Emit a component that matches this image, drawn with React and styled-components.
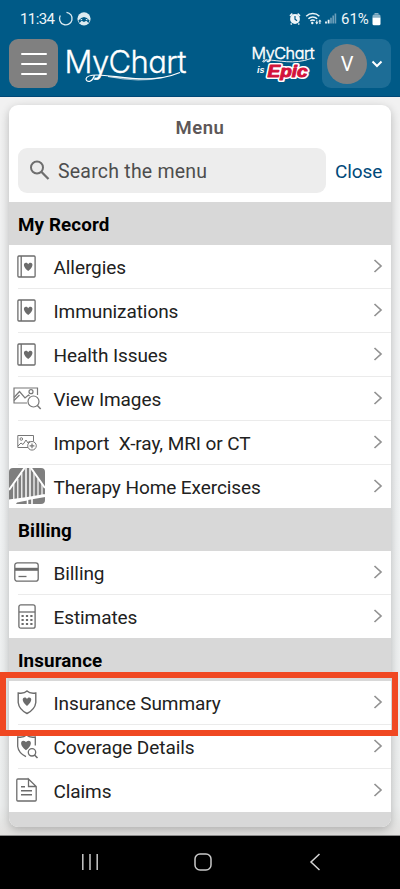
import React from 'react';
import styled, { createGlobalStyle } from 'styled-components';

const GlobalStyle = createGlobalStyle`
  * {
    box-sizing: border-box;
  }

  body {
    margin: 0;
    background: #f1f2f2;
    font-family: Roboto, sans-serif;
  }

  svg {
    display: block;
    flex: none;
    overflow: visible;
  }
`;

const Phone = styled.div`
  position: relative;
  display: flex;
  flex-direction: column;
  width: 400px;
  height: 889px;
  overflow: hidden;
`;

const Header = styled.header`
  height: 97px;
  background: #005a87;
  border-bottom: 1px solid #004877;
`;

const StatusBar = styled.div`
  display: flex;
  align-items: center;
  justify-content: space-between;
  height: 38px;
  padding: 0 19px 0 20px;
  color: #eef5f8;
`;

const StatusGroup = styled.div`
  display: flex;
  align-items: center;
`;

const StatusText = styled.span`
  width: ${({ $width }) => $width}px;
  font-size: 15px;
  line-height: 18px;
  letter-spacing: ${({ $tight }) => ($tight ? '-0.6px' : '0')};
  white-space: nowrap;
`;

const Toolbar = styled.div`
  display: flex;
  align-items: center;
  height: 49px;
  margin-top: 1px;
  padding: 0 9px;
`;

const MenuButton = styled.button`
  display: flex;
  flex-direction: column;
  align-items: center;
  justify-content: center;
  gap: 8px;
  width: 49px;
  height: 49px;
  margin-right: 2px;
  padding: 0;
  border: 0;
  border-radius: 9px;
  background: #808080;
`;

const MenuBar = styled.span`
  width: 26px;
  height: 2px;
  border-radius: 1px;
  background: #fff;
`;

const Spacer = styled.div`
  flex: 1;
`;

const AccountButton = styled.button`
  display: flex;
  align-items: center;
  gap: 4px;
  width: 69px;
  height: 49px;
  margin-left: 2px;
  padding: 0 0 0 5px;
  border: 0;
  border-radius: 9px;
  background: #1d6d96;
`;

const Avatar = styled.span`
  display: flex;
  align-items: center;
  justify-content: center;
  width: 40px;
  height: 40px;
  border-radius: 50%;
  background: #808080;
  color: #fff;
  font: 20px/1 Roboto, sans-serif;
`;

const Content = styled.main`
  height: 739px;
  padding: 8px 9px 0;
  overflow: hidden;
  border-bottom: 1px solid #8b8b8b;
  background: linear-gradient(#f1f1f1 0, #f1f3f4 50%, #eceeee 96%, #e2e1df 100%);
`;

const Card = styled.section`
  height: 722px;
  overflow: hidden;
  border-radius: 9px;
  background: #fff;
  box-shadow: 0 3px 10px rgba(0, 0, 0, 0.24);
`;

const CardTitle = styled.h1`
  height: 43px;
  margin: 0;
  padding-top: 11px;
  color: #5d5757;
  font-size: 18.5px;
  font-weight: 600;
  line-height: 24px;
  letter-spacing: 0.5px;
  text-align: center;
`;

const SearchRow = styled.div`
  display: flex;
  align-items: center;
  gap: 9px;
  height: 54px;
  padding: 0 9px 9px;
`;

const SearchBox = styled.div`
  display: flex;
  align-items: center;
  gap: 8px;
  flex: none;
  width: 308px;
  height: 45px;
  padding: 0 0 1px 11px;
  border-radius: 9px;
  background: #ededed;
`;

const SearchText = styled.span`
  padding-top: 3px;
  color: #4d4d4d;
  font-size: 19.5px;
  letter-spacing: 0.22px;
`;

const CloseLink = styled.a`
  padding-top: 2px;
  color: #00497a;
  font-size: 19px;
  letter-spacing: -0.1px;
`;

const SectionTitle = styled.h2`
  height: 43px;
  margin: 0;
  padding-left: 9px;
  background: #d8d8d8;
  color: #000;
  font-size: 18.8px;
  font-weight: 700;
  line-height: 46px;
  letter-spacing: 0.12px;
`;

const Row = styled.div`
  display: flex;
  align-items: center;
  height: ${({ $last }) => ($last ? 43 : 44)}px;
  padding: 0 8px ${({ $last }) => ($last ? 0 : 1)}px 0;
  background: ${({ $last }) =>
    $last ? 'none' : 'linear-gradient(#ebebeb, #ebebeb) 9px 100% / 100% 1px no-repeat'};
`;

const IconCell = styled.span`
  display: flex;
  justify-content: center;
  width: 36px;
  padding: 0 1px 1px 0;
`;

const RowLabel = styled.span`
  flex: 1;
  padding: 2px 0 0 8.5px;
  color: #212121;
  font-size: 19px;
  line-height: 24px;
  letter-spacing: -0.08px;
  white-space: pre;
`;

const RowArrow = styled.span`
  padding-bottom: 1px;
`;

const Highlight = styled.div`
  position: absolute;
  top: 672px;
  left: 0;
  width: 398px;
  height: 64px;
  border: 6px solid #f04822;
`;

const NavBar = styled.nav`
  display: flex;
  align-items: center;
  justify-content: space-between;
  flex: 1;
  padding: 0 79px 2px 81px;
  background: #000;
`;

const HomeButton = styled.span`
  margin-right: 3px;
`;

/* Status icons */

const LeftStatusIcons = () => (
  <svg width="36" height="18" viewBox="57 10 36 18" fill="none">
    <path d="M66.5 12.3a6.3 6.3 0 1 1-6.2 3.2" stroke="#dcebf1" strokeWidth="1.3" />
    <circle cx="84" cy="18.8" r="6.6" fill="#dceaf0" />
    <path d="M78.4 20.5q5.6-7 11.2 0l-1.2 2.4-2-2.2-2.4 1.2-2.4-1.2-2 2.2z" fill="#005a87" />
    <path d="M82 22.5h4l-1 2h-2z" fill="#dceaf0" />
    <path d="M80.5 19.8l1.7-.4M87.5 19.8l-1.7-.4" stroke="#dceaf0" strokeWidth="1" />
  </svg>
);

const RightStatusIcons = () => (
  <svg width="52" height="18" viewBox="289 10 52 18" fill="none">
    <circle cx="295" cy="19" r="4.9" fill="#eef5f8" />
    <path
      d="M290 15.8l2.4-2.1M300 15.8l-2.4-2.1M291.7 23.5l-1 1M298.3 23.5l1 1"
      stroke="#eef5f8"
      strokeWidth="1.7"
    />
    <path d="M295 16v3.2l2 1.6" stroke="#005a87" strokeWidth="1.2" />
    <path
      d="M306.2 16.2a9.5 9.5 0 0 1 13.2 0M308.4 18.7a6.4 6.4 0 0 1 8.8 0M310.4 21a3.6 3.6 0 0 1 4.4-.3"
      stroke="#eef5f8"
      strokeWidth="1.5"
    />
    <circle cx="312.3" cy="23" r="1.2" fill="#eef5f8" />
    <path d="M316.8 20.5v3M319.9 24v-3" stroke="#eef5f8" strokeWidth="1.1" />
    <path d="M315.2 22.3h3.2l-1.6 2.2zM318.3 21.6h3.2l-1.6-2.2z" fill="#eef5f8" />
    <path d="M326 23.5v-2M328.6 23.5v-3.8" stroke="#eef5f8" strokeWidth="1.8" />
    <path d="M331 23.5v-5.7M333.2 23.5v-8M335.4 23.5v-10" stroke="#6d9fba" strokeWidth="1.6" />
  </svg>
);

const BatteryIcon = () => (
  <svg width="9" height="13" viewBox="0 0 9 13">
    <path d="M2.5 0h4v1.5h-4z" fill="#8db3c7" />
    <path d="M.5 3q0-1.5 1.5-1.5h5q1.5 0 1.5 1.5v2h-8z" fill="#8db3c7" />
    <path d="M.5 4.7h8v6.1q0 1.5-1.5 1.5H2q-1.5 0-1.5-1.5z" fill="#fff" />
  </svg>
);

/* Logos */

const LogoText = styled.text`
  fill: #fff;
  stroke: #fff;
  stroke-width: ${({ $stroke }) => $stroke};
  font-family: Inter, Lato, sans-serif;
  font-size: ${({ $size }) => $size}px;
  font-weight: 300;
  font-feature-settings: 'cv11';
`;

const EpicText = styled.text`
  fill: #d3133b;
  stroke: ${({ $outline }) => ($outline ? '#fff' : '#d3133b')};
  stroke-width: ${({ $outline }) => ($outline ? 4 : 1)};
  stroke-linejoin: round;
  font: italic 700 17px 'Liberation Sans', Arial, sans-serif;
`;

const MyChartLogo = () => (
  <svg width="134" height="49" viewBox="60 38 134 49" fill="none" stroke="#fff">
    <LogoText x="64.5" y="72" $size={31} $stroke={0.3} textLength="122">
      MyChart
    </LogoText>
    <path
      d="M94.500 74.500Q93 79 90 80.300Q86.500 81 86 78Q86.500 74 97 74C117 74 148 84.500 180 71.500"
      strokeWidth="1.2"
    />
    <path d="M108 75.500Q140 82 163 76.500Q140 79.500 108 75.500z" strokeWidth=".6" />
  </svg>
);

const EpicLogo = () => (
  <svg width="74" height="49" viewBox="246 38 74 49" fill="none" stroke="#fff">
    <LogoText x="251.5" y="57.5" $size={16.2} $stroke={0.45} textLength="63">
      MyChart
    </LogoText>
    <path
      d="M266.500 58.500Q265 61.500 263 61Q261.500 59 267 59C278 59 294 64 311 57.500"
      strokeWidth=".9"
    />
    <text
      x="257"
      y="71.5"
      fontSize="9"
      fontWeight="700"
      fontStyle="italic"
      fontFamily="'Liberation Sans', Arial, sans-serif"
      fill="#fff"
      stroke="none"
    >
      is
    </text>
    <EpicText x="267.5" y="76.3" $outline textLength="40" lengthAdjust="spacingAndGlyphs">
      Epic
    </EpicText>
    <EpicText x="267.5" y="76.3" textLength="40" lengthAdjust="spacingAndGlyphs" aria-hidden="true">
      Epic
    </EpicText>
  </svg>
);

/* Small controls */

const ChevronDown = () => (
  <svg width="12" height="8" viewBox="0 0 12 8" fill="none">
    <path d="M1.500 1.500L6 6l4.500-4.500" stroke="#fff" strokeWidth="2" />
  </svg>
);

const ChevronRight = () => (
  <svg width="10" height="14" viewBox="0 0 10 14" fill="none">
    <path d="M1.500 1l6.500 6-6.500 6" stroke="#929292" strokeWidth="1.700" />
  </svg>
);

const SearchIcon = () => (
  <svg width="21" height="21" viewBox="0 0 21 21" fill="none" stroke="#6e6e6e" strokeWidth="2">
    <circle cx="8" cy="7.500" r="6" />
    <path d="M12.300 11.800L19.500 19" strokeWidth="2.300" />
  </svg>
);

/* Menu icons */

const HEART =
  'M0 4.600C-5.600.5-4.900-3.700-2.300-3.700-1.100-3.700-.3-3 0-2.300.3-3 1.100-3.700 2.300-3.700 4.900-3.700 5.600.5 0 4.600z';

const RecordIcon = () => (
  <svg width="19" height="23" viewBox="0 0 19 23" fill="none" stroke="#6c6c6c" strokeWidth="1.300">
    <rect x=".9" y="1" width="17.200" height="21" rx="1" />
    <path d="M4.200 1v21" />
    <path d={HEART} transform="translate(11.200 11.500)" fill="#6c6c6c" stroke="none" />
  </svg>
);

const ImagesIcon = () => (
  <svg width="28" height="24" viewBox="0 0 28 24" fill="none" stroke="#777" strokeWidth="1.200">
    <path d="M14 17H1V2h23.500v7" />
    <path d="M1 11.500l5.500-6 5.500 6.500 3.500-3 1 1M1 14.500l5.500-5.500" />
    <circle cx="18" cy="5.700" r="2" />
    <circle cx="20.500" cy="15.500" r="5.500" fill="#fff" />
    <path d="M24.400 19.400l3.300 3.600" strokeWidth="1.500" />
  </svg>
);

const ImportIcon = () => (
  <svg width="20" height="17" viewBox="0 0 20 17" fill="none" stroke="#777" strokeWidth="1">
    <path d="M11 13.500H.8V1.500h15.700v6" />
    <circle cx="4.300" cy="5" r="1.300" />
    <path d="M1 12l3-3 2 1.500 3-4.500 2 3 1.500-2 1.500 1.500" />
    <circle cx="15" cy="11.800" r="4.300" fill="#fff" />
    <path d="M15 9.400v4.800M12.600 11.800h4.800" strokeWidth="1.200" />
  </svg>
);

const TherapySvg = styled.svg`
  margin-right: -1px;
`;

const TherapyIcon = () => (
  <TherapySvg width="36" height="36" viewBox="0 0 36 36" fill="none">
    <rect width="36" height="36" rx="4" fill="#7f7f7f" />
    <g stroke="#fff">
      <path d="M15.500 0L0 22M22 0l14 20" strokeWidth="2" />
      <path d="M17 0v31M21 0v31" strokeWidth="1.500" />
      <path d="M12.800 5v25M8.800 11v20M4.800 16v15M25 5v25M29 11v18M33 16v12" strokeWidth="1.200" />
      <path d="M0 33q18-2 36-5.500" strokeWidth="3" />
      <path d="M18.500 31v5M23 31v5" strokeWidth="1.600" />
    </g>
    <path d="M0 32l18-1.500v2L8 34.500 7 36H0z" fill="#fff" />
  </TherapySvg>
);

const CardIcon = () => (
  <svg width="25" height="20" viewBox="0 0 25 20" fill="none" stroke="#6c6c6c" strokeWidth="1.300">
    <rect x=".8" y=".8" width="23.400" height="18.400" rx="2.500" />
    <path d="M1 7.300h23" strokeWidth="3" />
    <path d="M4.500 14.500h8" />
  </svg>
);

const CalculatorIcon = () => (
  <svg width="18" height="25" viewBox="0 0 18 25" fill="none" stroke="#6c6c6c" strokeWidth="1.300">
    <rect x=".9" y=".8" width="16.200" height="23.400" rx="2" />
    <path d="M1 8h16" />
    {[12, 16, 20].map((y) => (
      <path key={y} d={`M3.500 ${y}h2.200M7.900 ${y}h2.200M12.300 ${y}h2.200`} strokeWidth="2.200" />
    ))}
  </svg>
);

const SHIELD = 'M10 1Q7 4 1.200 3v9.500Q2 19.500 10 23.500q8-4 8.800-11V3Q13 4 10 1z';

const ShieldIcon = () => (
  <svg width="20" height="25" viewBox="0 0 20 25" fill="none" stroke="#6c6c6c" strokeWidth="1.400">
    <path d={SHIELD} />
    <path d={HEART} transform="translate(10 11.300)" fill="#6c6c6c" stroke="none" />
  </svg>
);

const CoverageIcon = () => (
  <svg width="22" height="25" viewBox="-.5 0 22 25" fill="none" stroke="#6c6c6c" strokeWidth="1.300">
    <path d="M9.500 22.700Q2 19 1.200 12.500V3Q7 4 10 1q3 3 8.800 2v8.500" />
    <path d={HEART} transform="translate(9.500 11) scale(1.150)" fill="#6c6c6c" stroke="none" />
    <circle cx="15.500" cy="18.300" r="3.700" fill="#fff" />
    <path d="M18 21l3 3" strokeWidth="1.600" />
  </svg>
);

const ClaimIcon = () => (
  <svg width="21" height="24" viewBox="0 0 21 24" fill="none" stroke="#6c6c6c" strokeWidth="1.300">
    <path d="M12.500 1H1.800Q.8 1 .8 2v20q0 1 1 1h17.400q1 0 1-1V8.500L12.500 1v7.500h7.700" />
    <path d="M5 8.700h4M5 12.700h11M5 16.700h11" strokeWidth="1.400" />
  </svg>
);

const sections = [
  {
    title: 'My Record',
    items: [
      { label: 'Allergies', Icon: RecordIcon },
      { label: 'Immunizations', Icon: RecordIcon },
      { label: 'Health Issues', Icon: RecordIcon },
      { label: 'View Images', Icon: ImagesIcon },
      { label: 'Import  X-ray, MRI or CT', Icon: ImportIcon },
      { label: 'Therapy Home Exercises', Icon: TherapyIcon },
    ],
  },
  {
    title: 'Billing',
    items: [
      { label: 'Billing', Icon: CardIcon },
      { label: 'Estimates', Icon: CalculatorIcon },
    ],
  },
  {
    title: 'Insurance',
    items: [
      { label: 'Insurance Summary', Icon: ShieldIcon },
      { label: 'Coverage Details', Icon: CoverageIcon },
      { label: 'Claims', Icon: ClaimIcon },
    ],
  },
];

const App = () => {
  return (
    <Phone>
      <GlobalStyle />
      <Header>
        <StatusBar>
          <StatusGroup>
            <StatusText $width={37} $tight>
              11:34
            </StatusText>
            <LeftStatusIcons />
          </StatusGroup>
          <StatusGroup>
            <RightStatusIcons />
            <StatusText $width={31}>61%</StatusText>
            <BatteryIcon />
          </StatusGroup>
        </StatusBar>
        <Toolbar>
          <MenuButton aria-label="Menu">
            <MenuBar />
            <MenuBar />
            <MenuBar />
          </MenuButton>
          <MyChartLogo />
          <Spacer />
          <EpicLogo />
          <AccountButton aria-label="Account">
            <Avatar>V</Avatar>
            <ChevronDown />
          </AccountButton>
        </Toolbar>
      </Header>

      <Content>
        <Card>
          <CardTitle>Menu</CardTitle>
          <SearchRow>
            <SearchBox>
              <SearchIcon />
              <SearchText>Search the menu</SearchText>
            </SearchBox>
            <CloseLink>Close</CloseLink>
          </SearchRow>
          {sections.map(({ title, items }) => (
            <React.Fragment key={title}>
              <SectionTitle>{title}</SectionTitle>
              {items.map(({ label, Icon }, index) => (
                <Row key={label} $last={index === items.length - 1}>
                  <IconCell>
                    <Icon />
                  </IconCell>
                  <RowLabel>{label}</RowLabel>
                  <RowArrow>
                    <ChevronRight />
                  </RowArrow>
                </Row>
              ))}
            </React.Fragment>
          ))}
          <SectionTitle />
        </Card>
      </Content>

      <NavBar>
        <svg width="18" height="18" viewBox="0 0 18 18" stroke="#c9c9c9" strokeWidth="1.500">
          <path d="M1.800 1v16M9 1v16M16.200 1v16" />
        </svg>
        <HomeButton>
          <svg width="18" height="18" viewBox="0 0 18 18" fill="none" stroke="#c9c9c9" strokeWidth="1.500">
            <rect x="1" y="1" width="16" height="16" rx="5" />
          </svg>
        </HomeButton>
        <svg width="12" height="18" viewBox="0 0 12 18" fill="none" stroke="#d4d4d4" strokeWidth="1.500">
          <path d="M10.500 1L2 9l8.500 8" />
        </svg>
      </NavBar>
      <Highlight />
    </Phone>
  );
};

export default App;
